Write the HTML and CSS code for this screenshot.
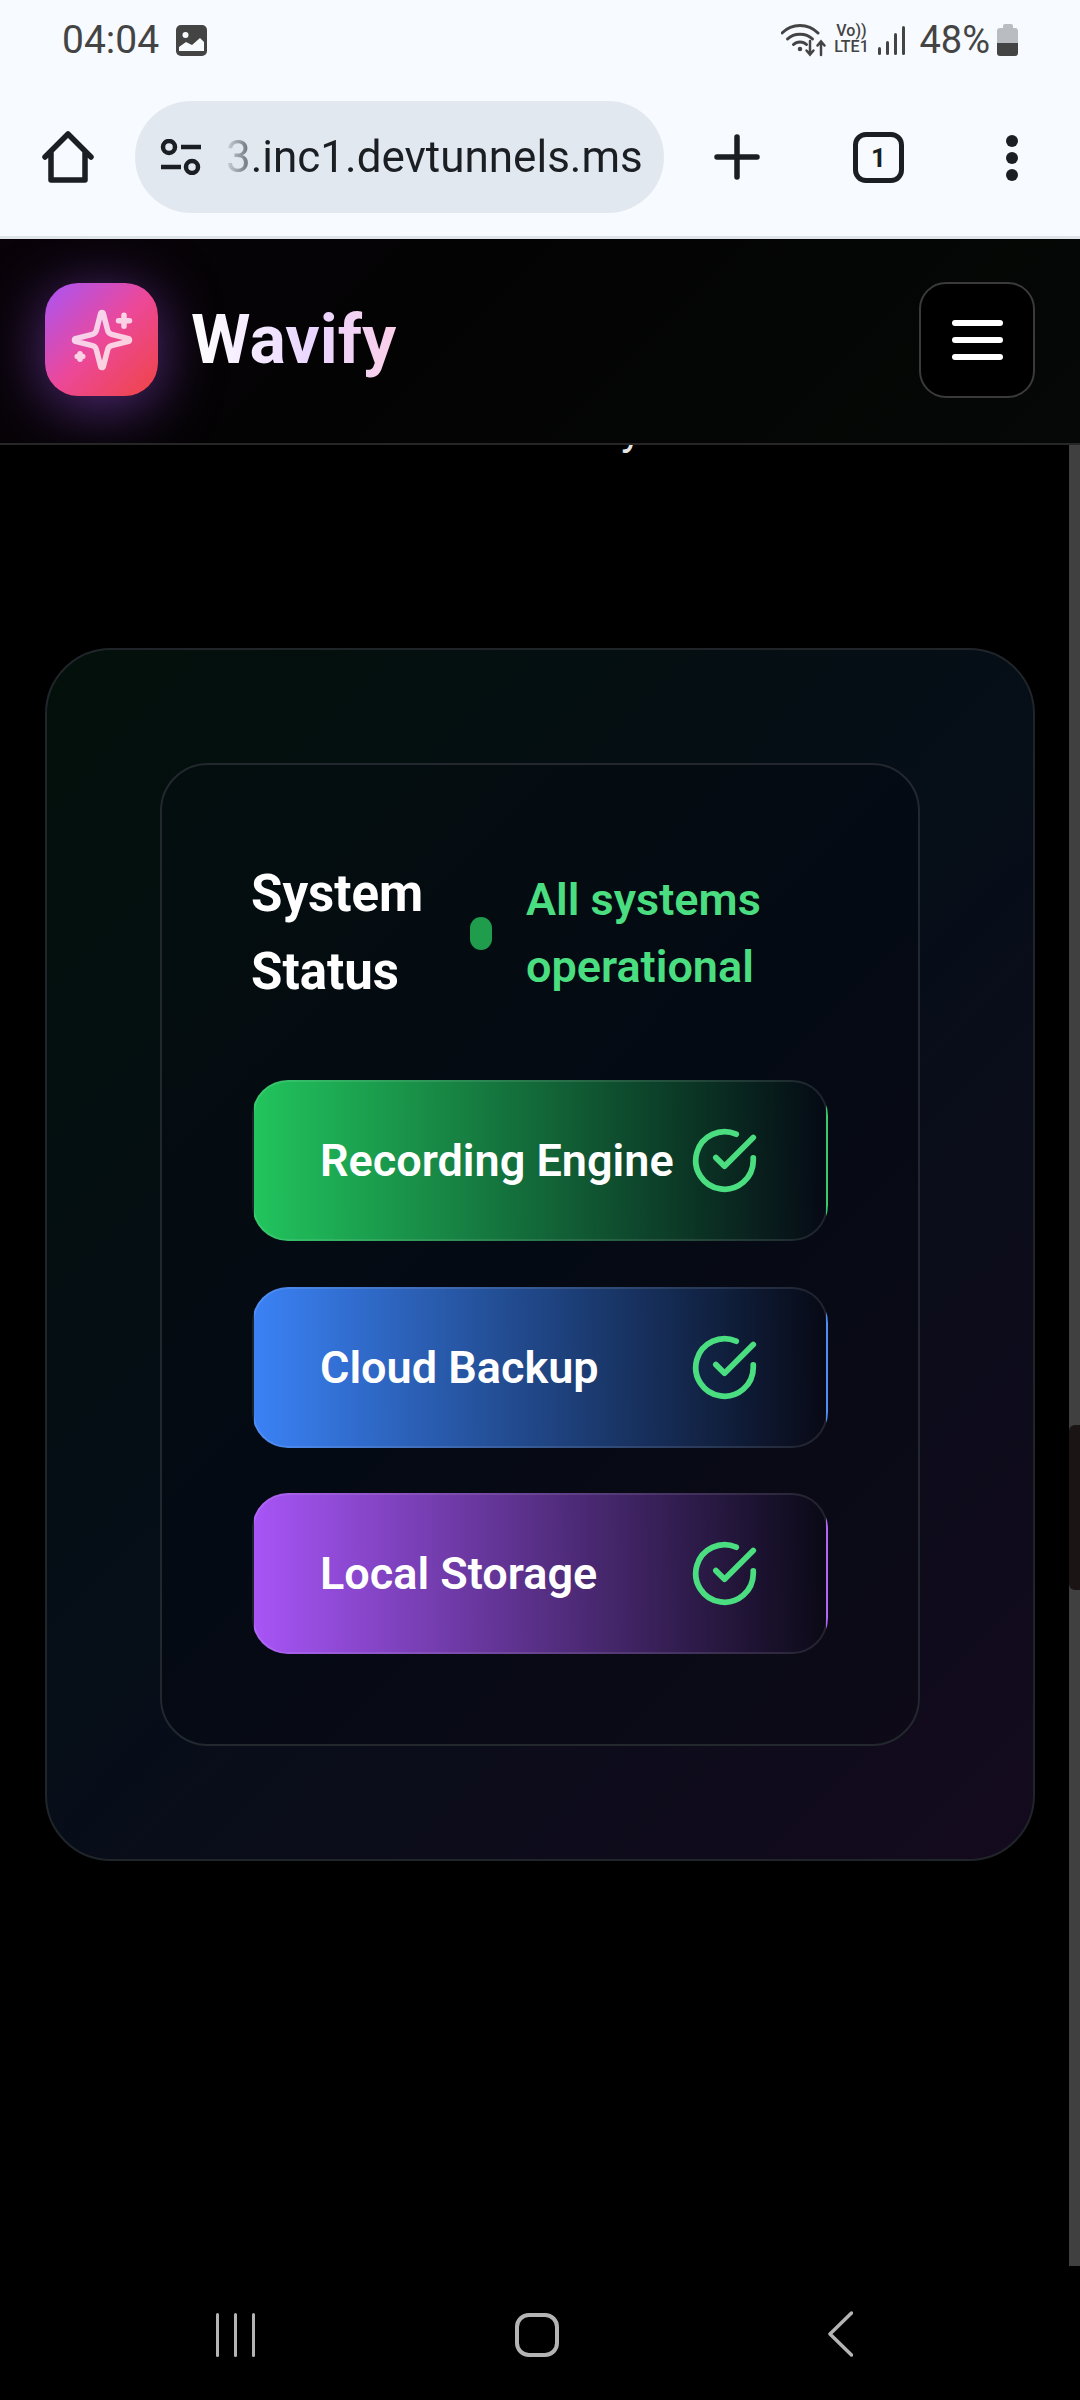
FILE: index.html
```html
<!DOCTYPE html>
<html>
<head>
  <title>Wavify</title>
  <link rel="stylesheet" href="styles.css">
</head>
<body>
  <div class="statusbar">
    <div class="status-left">
      <span class="clock">04:04</span>
      <svg class="pic-icon" viewBox="0 0 31 31">
        <rect width="31" height="31" rx="5" fill="#444"/>
        <circle cx="9.5" cy="10" r="3" fill="#f7faff"/>
        <path d="M3 26v-4l7-5 6 3 8-7 4 4v9z" fill="#f7faff"/>
      </svg>
    </div>
    <div class="status-right">
      <svg class="wifi-icon" viewBox="0 0 46 34" fill="none" stroke="#444" stroke-width="3" stroke-linecap="round">
        <path d="M1 10C11 0 27 0 37 10"/>
        <path d="M6.500 16C13 9.500 25 9.500 31.500 16"/>
        <path d="M12.500 21.500C16 18 22 18 25.500 21.500"/>
        <circle cx="19" cy="26" r="1.500" fill="#444" stroke-width="1.500"/>
        <path d="M29 18v13M25.500 27.500l3.500 4 3.500-4" stroke-width="2.500"/>
        <path d="M40 32V19M36.500 22.500l3.500-4 3.500 4" stroke-width="2.500"/>
      </svg>
      <div class="volte"><span>Vo))</span><span>LTE1</span></div>
      <div class="signal"><i class="s1"></i><i class="s2"></i><i class="s3"></i><i class="s4"></i></div>
      <span class="battery-text">48%</span>
      <div class="battery"><div class="battery-cap"></div><div class="battery-empty"></div><div class="battery-full"></div></div>
    </div>
  </div>

  <div class="toolbar">
    <svg class="home-icon" viewBox="0 0 52 52" fill="none" stroke="#1b1f23" stroke-width="5.500" stroke-linejoin="round" stroke-linecap="round">
      <path d="M3 26 26 3l23 23M9 21v28h34V21"/>
    </svg>
    <div class="urlbar">
      <svg class="tune-icon" viewBox="0 0 41 36" fill="none" stroke="#1b1f23" stroke-width="4.500">
        <circle cx="9" cy="8" r="6"/>
        <path d="M21 8h20M1 28h20"/>
        <circle cx="32" cy="28" r="6"/>
      </svg>
      <span class="url">3.inc1.devtunnels.ms</span>
    </div>
    <svg class="plus-icon" viewBox="0 0 46 46" fill="none" stroke="#1b1f23" stroke-width="5.500" stroke-linecap="round">
      <path d="M23 3v40M3 23h40"/>
    </svg>
    <div class="tabs-count">1</div>
    <div class="dots"><i></i><i></i><i></i></div>
  </div>

  <header class="site-header">
    <div class="brand">
      <div class="logo">
        <svg class="logo-icon" viewBox="0 0 24 24" fill="none" stroke="currentColor" stroke-width="2" stroke-linecap="round" stroke-linejoin="round">
          <path d="M9.937 15.500A2 2 0 0 0 8.500 14.063l-6.135-1.582a.5.5 0 0 1 0-.962L8.500 9.936A2 2 0 0 0 9.937 8.500l1.582-6.135a.5.5 0 0 1 .963 0L14.063 8.500A2 2 0 0 0 15.500 9.937l6.135 1.581a.5.5 0 0 1 0 .964L15.500 14.063a2 2 0 0 0-1.437 1.437l-1.582 6.135a.5.5 0 0 1-.963 0z"/>
          <path d="M20 3v4M22 5h-4M4 17v2M5 18H3"/>
        </svg>
      </div>
      <span class="brand-name">Wavify</span>
    </div>
    <button class="menu-btn"><i></i><i></i><i></i></button>
  </header>

  <div class="page">
    <main class="content">
      <div class="clipped-line"><span>y</span></div>
      <section class="outer-card">
        <div class="inner-card">
          <div class="status-head">
            <h2>System Status</h2>
            <div class="status-live">
              <span class="status-dot"></span>
              <span class="status-text">All systems operational</span>
            </div>
          </div>
          <div class="service service-green">
            <span>Recording Engine</span>
            <svg class="check" viewBox="0 0 24 24" fill="none" stroke="#4ade80" stroke-width="2" stroke-linecap="round" stroke-linejoin="round"><path d="M22 11.080V12a10 10 0 1 1-5.930-9.140"/><path d="M22 4 12 14.010l-3-3"/></svg>
          </div>
          <div class="service service-blue">
            <span>Cloud Backup</span>
            <svg class="check" viewBox="0 0 24 24" fill="none" stroke="#4ade80" stroke-width="2" stroke-linecap="round" stroke-linejoin="round"><path d="M22 11.080V12a10 10 0 1 1-5.930-9.140"/><path d="M22 4 12 14.010l-3-3"/></svg>
          </div>
          <div class="service service-purple">
            <span>Local Storage</span>
            <svg class="check" viewBox="0 0 24 24" fill="none" stroke="#4ade80" stroke-width="2" stroke-linecap="round" stroke-linejoin="round"><path d="M22 11.080V12a10 10 0 1 1-5.930-9.140"/><path d="M22 4 12 14.010l-3-3"/></svg>
          </div>
        </div>
      </section>
    </main>
    <div class="scroll-track"><div class="scroll-thumb"></div></div>
  </div>

  <nav class="navbar">
    <div class="nav-recent"><i></i><i></i><i></i></div>
    <div class="nav-home"></div>
    <svg class="nav-back" viewBox="0 0 25 46" fill="none" stroke="#b4b4b4" stroke-width="3.500" stroke-linecap="round" stroke-linejoin="round">
      <path d="M23.500 2 2 23l21.500 21"/>
    </svg>
  </nav>
</body>
</html>
```

FILE: styles.css
```css
* {
  box-sizing: border-box;
}

body {
  margin: 0;
  width: 1080px;
  height: 2400px;
  display: flex;
  flex-direction: column;
  background: #000;
  font-family: Roboto, "Liberation Sans", sans-serif;
  overflow: hidden;
}

/* status bar */
.statusbar {
  height: 80px;
  background: #f7faff;
  display: flex;
  justify-content: space-between;
  padding: 18px 62px 0;
  color: #444;
}

.status-left {
  display: flex;
  align-items: flex-start;
  gap: 17px;
}

.clock {
  font-size: 39px;
  line-height: 44px;
}

.pic-icon {
  width: 31px;
  height: 31px;
  margin-top: 7px;
}

.status-right {
  display: flex;
  align-items: flex-start;
}

.wifi-icon {
  width: 46px;
  height: 34px;
  margin-top: 5px;
}

.volte {
  width: 38px;
  margin-left: 5px;
  margin-top: 5px;
  display: flex;
  flex-direction: column;
  align-items: center;
  font-size: 16px;
  line-height: 16px;
  font-weight: 500;
}

.signal {
  margin-left: 8px;
  margin-top: 7px;
  height: 30px;
  display: flex;
  align-items: flex-end;
  gap: 5px;
}

.signal i {
  width: 3px;
  background: #444;
  border-radius: 2px;
}

.signal .s1 { height: 8px; }
.signal .s2 { height: 14px; }
.signal .s3 { height: 22px; }
.signal .s4 { height: 29px; }

.battery-text {
  margin-left: 14px;
  font-size: 38px;
  line-height: 44px;
}

.battery {
  width: 21px;
  height: 32px;
  margin-left: 7px;
  margin-top: 6px;
  display: flex;
  flex-direction: column;
  align-items: center;
}

.battery-cap {
  width: 10px;
  height: 4px;
  background: #b9bcc1;
  border-radius: 2px 2px 0 0;
}

.battery-empty {
  width: 21px;
  height: 15px;
  background: #b9bcc1;
  border-radius: 3px 3px 0 0;
}

.battery-full {
  width: 21px;
  height: 13px;
  background: #444;
  border-radius: 0 0 3px 3px;
}

/* browser toolbar */
.toolbar {
  height: 159px;
  background: #f7faff;
  border-bottom: 3px solid #dfe3ea;
  display: flex;
  align-items: flex-start;
  padding-top: 21px;
}

.home-icon {
  width: 52px;
  height: 52px;
  margin: 30px 0 0 42px;
}

.urlbar {
  width: 529px;
  height: 112px;
  margin-left: 41px;
  background: #e2e8f0;
  border-radius: 56px;
  display: flex;
  align-items: center;
  padding-left: 25px;
}

.tune-icon {
  width: 41px;
  height: 36px;
}

.url {
  margin-left: 25px;
  font-size: 44px;
  color: #1b1f23;
  white-space: nowrap;
  -webkit-mask-image: linear-gradient(to right, rgba(0, 0, 0, 0.1), rgba(0, 0, 0, 0.55) 22px, #000 24px);
  mask-image: linear-gradient(to right, rgba(0, 0, 0, 0.1), rgba(0, 0, 0, 0.55) 22px, #000 24px);
}

.plus-icon {
  width: 46px;
  height: 46px;
  margin: 33px 0 0 50px;
}

.tabs-count {
  width: 51px;
  height: 51px;
  margin: 31px 0 0 93px;
  border: 5px solid #1b1f23;
  border-radius: 13px;
  display: flex;
  align-items: center;
  justify-content: center;
  font-size: 26px;
  font-weight: 700;
  color: #1b1f23;
}

.dots {
  margin: 34px 0 0 102px;
  display: flex;
  flex-direction: column;
  gap: 5px;
}

.dots i {
  width: 12px;
  height: 12px;
  border-radius: 50%;
  background: #1b1f23;
}

/* site header */
.site-header {
  height: 206px;
  padding: 0 45px 3px;
  background: linear-gradient(135deg, #090309, #030303 40%, #050806);
  border-bottom: 2px solid #262626;
  display: flex;
  align-items: center;
  justify-content: space-between;
  overflow: hidden;
}

.brand {
  display: flex;
  align-items: center;
  gap: 33px;
}

.logo {
  width: 113px;
  height: 113px;
  border-radius: 33px;
  background: linear-gradient(135deg, #a855f7, #ec4899 50%, #ef4444);
  box-shadow: 0 10px 60px rgba(168, 85, 247, 0.5);
  display: flex;
  align-items: center;
  justify-content: center;
}

.logo-icon {
  width: 66px;
  height: 66px;
  color: rgba(255, 255, 255, 0.75);
}

.brand-name {
  font-size: 68px;
  line-height: 90px;
  font-weight: 700;
  background: linear-gradient(to right, #fff, #e9d5ff 60%, #fbcfe8);
  -webkit-background-clip: text;
  background-clip: text;
  color: transparent;
}

.menu-btn {
  width: 116px;
  height: 116px;
  background: #000;
  border: 2px solid #3a3a3a;
  border-radius: 27px;
  padding: 0;
  display: flex;
  flex-direction: column;
  align-items: center;
  justify-content: center;
  gap: 11px;
}

.menu-btn i {
  width: 51px;
  height: 6px;
  border-radius: 3px;
  background: #fff;
}

/* page */
.page {
  flex: 1;
  display: flex;
  min-height: 0;
}

.content {
  flex: 1;
  padding: 0 34px 0 45px;
}

/* tail of a line scrolled away under the header */
.clipped-line {
  height: 8px;
  margin-left: 576px;
  overflow: hidden;
  color: #e6e6e6;
  font-size: 44px;
  line-height: 8px;
}

.clipped-line span {
  display: block;
  margin-top: -20px;
}

.outer-card {
  margin-top: 195px;
  height: 1213px;
  padding: 113px;
  border: 2px solid #20252a;
  border-radius: 66px;
  background: linear-gradient(135deg, #03100a, #060e18 50%, #140a1e);
}

.inner-card {
  height: 983px;
  padding: 90px 90px 0;
  border: 2px solid #23272e;
  border-radius: 48px;
  background: linear-gradient(135deg, #040e0e, #040a14 50%, #0e0a18);
}

.status-head {
  display: flex;
  align-items: center;
  height: 156px;
  margin: 0 0 69px -1px;
}

.status-head h2 {
  width: 219px;
  margin: 0;
  color: #fff;
  font-size: 51px;
  line-height: 78px;
  font-weight: 700;
}

.status-live {
  display: flex;
  align-items: center;
  gap: 34px;
}

.status-dot {
  width: 22px;
  height: 33px;
  border-radius: 11px;
  background: #1f9d4d;
}

.status-text {
  width: 260px;
  color: #4ade80;
  font-size: 45px;
  line-height: 67px;
  font-weight: 600;
}

.service {
  height: 161px;
  margin-bottom: 45.5px;
  padding: 0 67px 0 66px;
  border: 2px solid rgba(255, 255, 255, 0.1);
  border-radius: 36px;
  display: flex;
  align-items: center;
  justify-content: space-between;
  color: #fff;
  font-size: 45px;
  font-weight: 600;
}

.service-green {
  background-image: linear-gradient(to right, #22c55e, transparent);
}

.service-blue {
  background-image: linear-gradient(to right, #3b82f6, transparent);
}

.service-purple {
  background-image: linear-gradient(to right, #a855f7, transparent);
}

.check {
  width: 69px;
  height: 69px;
  flex-shrink: 0;
}

/* scrollbar */
.scroll-track {
  width: 11px;
  padding-top: 980px;
  background: #404040;
}

.scroll-thumb {
  height: 165px;
  background: #1a1414;
  border-radius: 6px 0 0 6px;
}

/* android nav */
.navbar {
  height: 134px;
  padding: 47px 0 0 216px;
  background: #000;
  display: flex;
  align-items: flex-start;
}

.nav-recent {
  display: flex;
  gap: 15px;
}

.nav-recent i {
  width: 3px;
  height: 44px;
  border-radius: 2px;
  background: #b4b4b4;
}

.nav-home {
  width: 44px;
  height: 44px;
  margin-left: 260px;
  border: 4px solid #b4b4b4;
  border-radius: 14px;
}

.nav-back {
  width: 25px;
  height: 46px;
  margin: -2px 0 0 269px;
}
```
